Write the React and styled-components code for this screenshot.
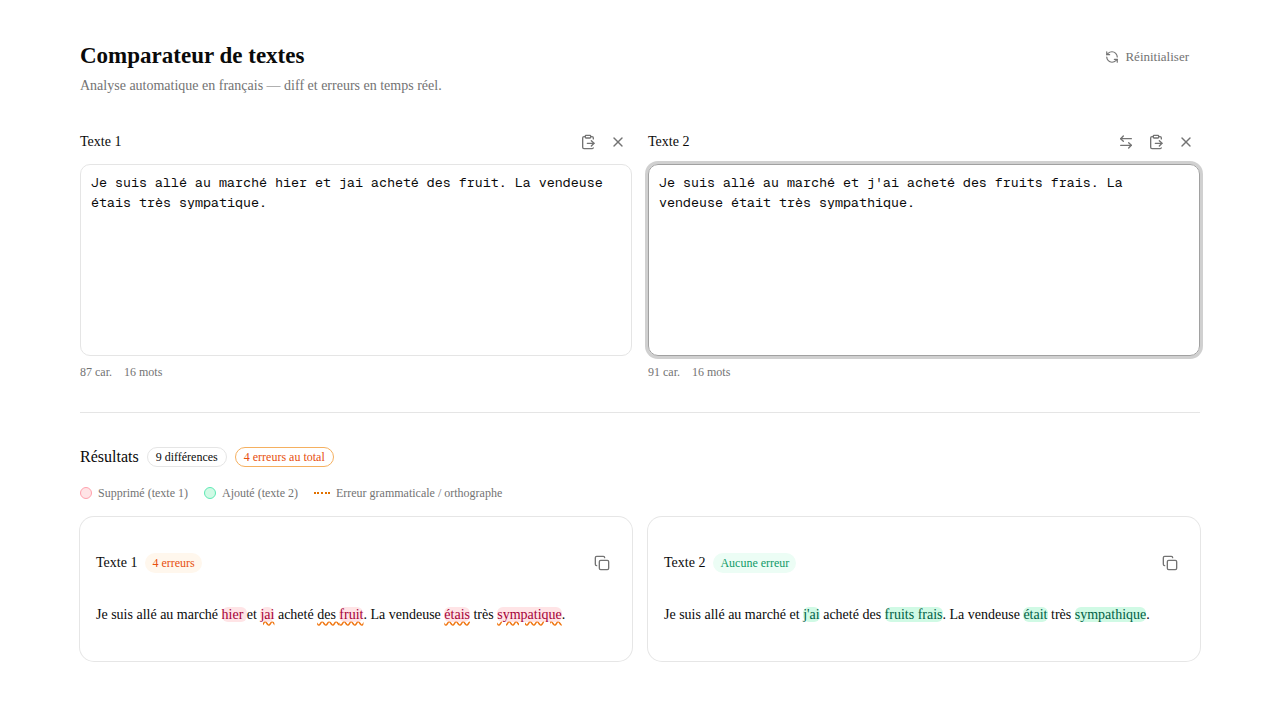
import React, { useRef, useState } from 'react';
import styled, { createGlobalStyle } from 'styled-components';
import { ArrowLeftRight, ClipboardPaste, Copy, RefreshCcw, X } from 'lucide-react';

const GlobalStyle = createGlobalStyle`
  *, *::before, *::after {
    box-sizing: border-box;
  }

  body {
    margin: 0;
    background: #fff;
    color: #0a0a0a;
    font-family: "Liberation Serif", "Times New Roman", serif;
    font-size: 14px;
    line-height: 20px;
  }

  h1, h2, h3, p {
    margin: 0;
    font-weight: 400;
  }
`;

const Page = styled.main`
  max-width: 1152px;
  margin: 0 auto;
  padding: 40px 16px;
  display: flex;
  flex-direction: column;
  gap: 32px;
`;

const Header = styled.header`
  display: flex;
  justify-content: space-between;
  align-items: flex-start;
`;

const Title = styled.h1`
  && {
    font-weight: 700;
  }
  font-size: 23px;
  line-height: 32px;
`;

const Subtitle = styled.p`
  margin-top: 4px;
  color: #737373;
`;

const ResetButton = styled.button`
  display: inline-flex;
  align-items: center;
  gap: 6px;
  height: 34px;
  padding: 0 11px;
  border: 0;
  border-radius: 8px;
  background: transparent;
  color: #737373;
  font-family: inherit;
  font-size: 13px;
  cursor: pointer;

  &:hover {
    background: #f5f5f5;
  }
`;

const Columns = styled.div`
  display: grid;
  grid-template-columns: 1fr 1fr;
  gap: 16px;

  @media (max-width: 760px) {
    grid-template-columns: 1fr;
  }
`;

const Field = styled.div`
  display: flex;
  flex-direction: column;
  gap: 8px;
`;

const Bar = styled.div`
  display: flex;
  align-items: center;
  justify-content: space-between;
  height: 28px;
`;

const Actions = styled.div`
  display: flex;
  gap: 2px;
`;

const IconButton = styled.button`
  display: inline-flex;
  align-items: center;
  justify-content: center;
  width: 28px;
  height: 28px;
  padding: 0;
  border: 0;
  border-radius: 8px;
  background: transparent;
  color: #737373;
  cursor: pointer;

  &:hover {
    background: #f5f5f5;
  }
`;

const TextArea = styled.textarea`
  display: block;
  width: 100%;
  height: 192px;
  padding: 8px 10px;
  border: 1px solid #e5e5e5;
  border-radius: 10px;
  outline: 0;
  resize: none;
  background: transparent;
  color: inherit;
  font-family: "Geist Mono", "Liberation Mono", monospace;
  line-height: 20px;

  &:focus {
    border-color: #a1a1a1;
    box-shadow: 0 0 0 3px rgba(161, 161, 161, 0.5);
  }
`;

const Counts = styled.div`
  display: flex;
  gap: 12px;
  color: #737373;
  font-size: 12px;
  line-height: 16px;
`;

const Separator = styled.hr`
  width: 100%;
  height: 1px;
  margin: 0;
  border: 0;
  background: #e5e5e5;
`;

const Results = styled.section`
  display: flex;
  flex-direction: column;
  gap: 16px;
`;

const Inline = styled.div`
  display: flex;
  align-items: center;
  gap: 8px;
`;

const ResultsTitle = styled.h2`
  font-size: 16px;
  line-height: 24px;
`;

const CardTitle = styled.h3`
  font-size: 14px;
  line-height: 20px;
`;

const tones = {
  plain: { color: '#0a0a0a', background: 'transparent', border: '#e5e5e5' },
  warning: { color: '#e7500f', background: 'transparent', border: '#f5b060' },
  error: { color: '#e7500f', background: '#fff7ed', border: 'transparent' },
  success: { color: '#109a68', background: '#ecfdf5', border: 'transparent' },
};

const Badge = styled.span`
  display: inline-flex;
  align-items: center;
  height: 20px;
  padding: 0 ${({ $small }) => ($small ? 6 : 8)}px;
  border: 1px solid ${({ $tone }) => tones[$tone].border};
  border-radius: 10px;
  background: ${({ $tone }) => tones[$tone].background};
  color: ${({ $tone }) => tones[$tone].color};
  font-size: 12px;
  line-height: 16px;
  white-space: nowrap;
`;

const Legend = styled.div`
  display: flex;
  flex-wrap: wrap;
  gap: 16px;
  color: #737373;
  font-size: 12px;
  line-height: 16px;
`;

const LegendItem = styled.span`
  display: inline-flex;
  align-items: center;
  gap: 6px;
`;

const Dot = styled.span`
  width: 12px;
  height: 12px;
  border: 1px solid ${({ $added }) => ($added ? '#5ee9b5' : '#ffa1ad')};
  border-radius: 50%;
  background: ${({ $added }) => ($added ? '#d0fae5' : '#ffe4e6')};
`;

const Dotted = styled.span`
  width: 16px;
  border-bottom: 2px dotted #e17100;
`;

const Card = styled.article`
  display: flex;
  flex-direction: column;
  gap: 24px;
  padding: 32px 16px;
  border-radius: 14px;
  background: #fff;
  box-shadow: 0 0 0 1px rgba(10, 10, 10, 0.1);
`;

const Paragraph = styled.p`
  line-height: 28px;
`;

const Removed = styled.del`
  border-radius: 6px;
  background: #ffe4e6;
  color: #a50036;
  text-decoration: none;
`;

const Added = styled.ins`
  border-radius: 6px;
  background: #d0fae5;
  color: #006045;
  text-decoration: none;
`;

const Mistake = styled.span`
  text-decoration: underline wavy #f0750f;
  text-underline-offset: 2px;
`;

const SAMPLE_1 = 'Je suis allé au marché hier et jai acheté des fruit. La vendeuse étais très sympatique.';
const SAMPLE_2 = "Je suis allé au marché et j'ai acheté des fruits frais. La vendeuse était très sympathique.";

const countWords = (text) => text.split(/\s+/).filter(Boolean).length;

const TextField = ({ id, label, value, onChange, onSwap, autoFocus }) => {
  const ref = useRef(null);

  const paste = async () => {
    onChange(await navigator.clipboard.readText());
    ref.current.focus();
  };

  return (
    <Field>
      <Bar>
        <label htmlFor={id}>{label}</label>
        <Actions>
          {onSwap && (
            <IconButton type="button" aria-label="Inverser" onClick={onSwap}>
              <ArrowLeftRight size={16} />
            </IconButton>
          )}
          <IconButton type="button" aria-label="Coller" onClick={paste}>
            <ClipboardPaste size={16} />
          </IconButton>
          <IconButton type="button" aria-label="Effacer" onClick={() => onChange('')}>
            <X size={16} />
          </IconButton>
        </Actions>
      </Bar>
      <TextArea
        id={id}
        ref={ref}
        value={value}
        spellCheck={false}
        autoFocus={autoFocus}
        onChange={(e) => onChange(e.target.value)}
      />
      <Counts>
        <span>{value.length} car.</span>
        <span>{countWords(value)} mots</span>
      </Counts>
    </Field>
  );
};

const ResultCard = ({ title, tone, status, source, children }) => (
  <Card>
    <Bar>
      <Inline>
        <CardTitle>{title}</CardTitle>
        <Badge $tone={tone} $small>{status}</Badge>
      </Inline>
      <IconButton type="button" aria-label="Copier" onClick={() => navigator.clipboard.writeText(source)}>
        <Copy size={16} />
      </IconButton>
    </Bar>
    <Paragraph>{children}</Paragraph>
  </Card>
);

const App = () => {
  const [first, setFirst] = useState(SAMPLE_1);
  const [second, setSecond] = useState(SAMPLE_2);

  const reset = () => {
    setFirst('');
    setSecond('');
  };

  const swap = () => {
    setFirst(second);
    setSecond(first);
  };

  return (
    <>
      <GlobalStyle />
      <Page>
        <Header>
          <div>
            <Title>Comparateur de textes</Title>
            <Subtitle>Analyse automatique en français — diff et erreurs en temps réel.</Subtitle>
          </div>
          <ResetButton type="button" onClick={reset}>
            <RefreshCcw size={14} />
            Réinitialiser
          </ResetButton>
        </Header>

        <Columns>
          <TextField id="texte-1" label="Texte 1" value={first} onChange={setFirst} />
          <TextField id="texte-2" label="Texte 2" value={second} onChange={setSecond} onSwap={swap} autoFocus />
        </Columns>

        <Separator />

        <Results>
          <Inline>
            <ResultsTitle>Résultats</ResultsTitle>
            <Badge $tone="plain">9 différences</Badge>
            <Badge $tone="warning">4 erreurs au total</Badge>
          </Inline>

          <Legend>
            <LegendItem><Dot />Supprimé (texte 1)</LegendItem>
            <LegendItem><Dot $added />Ajouté (texte 2)</LegendItem>
            <LegendItem><Dotted />Erreur grammaticale / orthographe</LegendItem>
          </Legend>

          <Columns>
            <ResultCard title="Texte 1" tone="error" status="4 erreurs" source={first}>
              Je suis allé au marché <Removed>hier </Removed>et{' '}
              <Removed><Mistake>jai</Mistake></Removed> acheté{' '}
              <Mistake>des <Removed>fruit</Removed></Mistake>. La vendeuse{' '}
              <Removed><Mistake>étais</Mistake></Removed> très{' '}
              <Removed><Mistake>sympatique</Mistake></Removed>.
            </ResultCard>
            <ResultCard title="Texte 2" tone="success" status="Aucune erreur" source={second}>
              Je suis allé au marché et <Added>j'ai</Added> acheté des{' '}
              <Added>fruits frais</Added>. La vendeuse <Added>était</Added> très{' '}
              <Added>sympathique</Added>.
            </ResultCard>
          </Columns>
        </Results>
      </Page>
    </>
  );
};

export default App;
